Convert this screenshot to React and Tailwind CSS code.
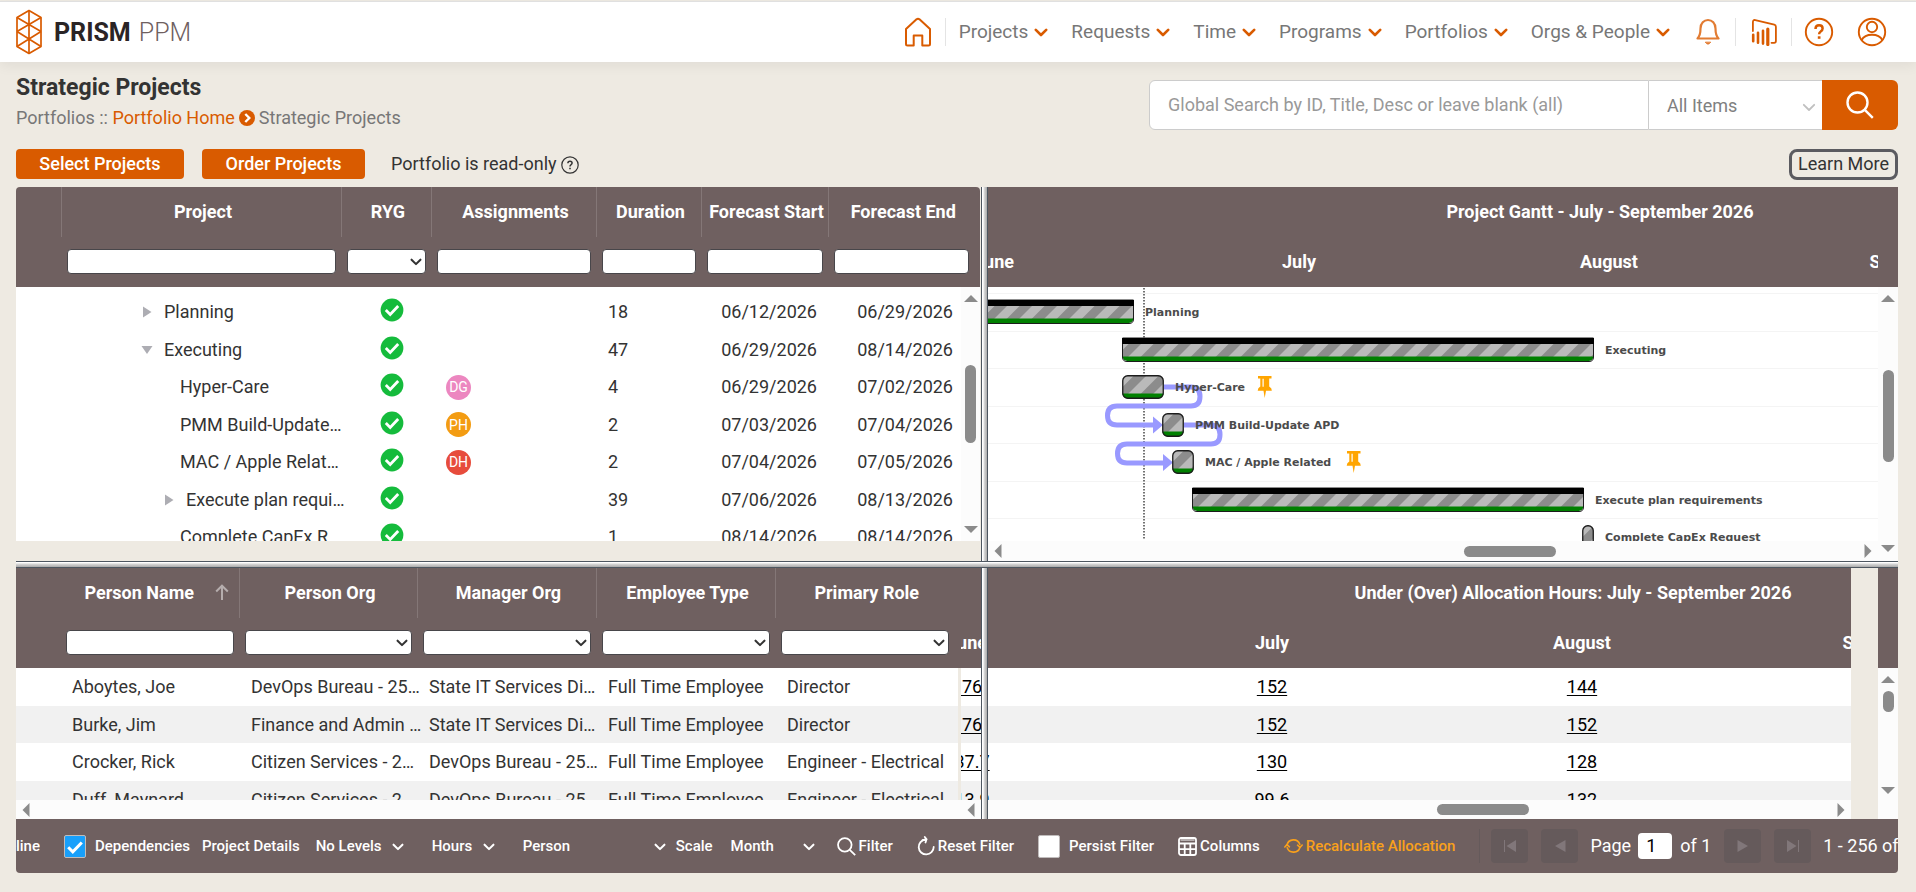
import React from "react";

const GRID_ROW = "h-[37px] odd:h-[38px]";

function Chevron({ className = "", strokeWidth = 2.4 }) {
  return (
    <svg viewBox="0 0 14 9" fill="none" stroke="currentColor" strokeWidth={strokeWidth} strokeLinecap="round" strokeLinejoin="round" className={"shrink-0 " + className} aria-hidden="true">
      <path d="M1.8 1.8 7 7l5.2-5.2" />
    </svg>
  );
}

function Logo() {
  return (
    <a href="#home" className="flex items-center gap-[11px]" aria-label="Prism PPM">
      <svg viewBox="0 0 28 46" className="h-[46px] w-7 shrink-0" fill="none" stroke="#d95b00" strokeWidth="1.7" strokeLinejoin="round" aria-hidden="true">
        <path d="M14 1.5 26 8.5v29l-12 7-12-7v-29z" />
        <path d="M14 1.5v43M2 8.5l24 14M26 8.5 2 22.5M2 22.5l24 15M26 22.5 2 37.5" />
      </svg>
      <span className="flex items-baseline gap-2 pt-0.5 text-[25px] leading-8 text-[#2a2425]">
        <span className="font-bold">PRISM</span>
        <span className="font-light text-[#6f6060]">PPM</span>
      </span>
    </a>
  );
}

const NAV = ["Projects", "Requests", "Time", "Programs", "Portfolios", "Orgs & People"];

function TopBar() {
  return (
    <header className="relative border-t border-[#e0e0e0] bg-white shadow-[0_4px_12px_rgba(0,0,0,0.06)]">
      <div className="flex h-[60px] items-center justify-between pr-[29px] pl-[15px]">
        <Logo />
        <nav className="flex items-center text-[#777777]" aria-label="Main">
          <a href="#home" aria-label="Home" className="text-[#d95b00]">
            <svg viewBox="0 0 28 30" className="h-[30px] w-7" fill="none" stroke="currentColor" strokeWidth="2" strokeLinejoin="round" aria-hidden="true">
              <path d="M2 12 12.5 2.3q1.5-1 3 0L26 12v15q0 1.5-1.5 1.5H18.300V18.500h-8.600v10H3.500Q2 28.500 2 27z" />
            </svg>
          </a>
          <span className="ml-[13px] h-7 w-px bg-[#e4e4e4]" />
          <ul className="ml-[13px] flex items-center gap-[23px]">
            {NAV.map((item) => (
              <li key={item}>
                <button type="button" className="flex items-center gap-1.5 text-[19px] leading-7">
                  {item}
                  <Chevron className="h-[9px] w-3.5 text-[#d95b00]" strokeWidth={2.6} />
                </button>
              </li>
            ))}
          </ul>
          <button type="button" aria-label="Notifications" className="ml-[26px] text-[#e27c33]">
            <svg viewBox="0 0 24 28" className="h-7 w-6" fill="none" stroke="currentColor" strokeWidth="2.2" strokeLinejoin="round" strokeLinecap="round" aria-hidden="true">
              <path d="M1.500 20.500C4.500 17.500 4.500 14 4.500 10.500 4.500 5 8 2 12 2s7.500 3 7.500 8.500c0 3.500 0 7 3 10z" />
              <path d="M9.500 24.500q2.500 3.500 5 0z" fill="currentColor" strokeWidth="1" />
            </svg>
          </button>
          <span className="ml-[15px] h-7 w-px bg-[#e4e4e4]" />
          <a href="#reports" aria-label="Reports" className="ml-[15px] text-[#d95b00]">
            <svg viewBox="0 0 26 28" className="h-7 w-[26px]" fill="none" aria-hidden="true">
              <path d="M1.900 13V4.200q0-2.600 2.400-2.100l19 4.600q1.600.4 1.600 2V23q0 1.800-1.800 1.800H20.500" stroke="currentColor" strokeWidth="1.800" strokeLinecap="round" />
              <path d="M2.200 16.800v6.400M7 14.800v10M12 12.800v12.800" stroke="currentColor" strokeWidth="2.600" strokeLinecap="round" />
              <path d="M16.800 11v15.500" stroke="currentColor" strokeWidth="3.200" strokeLinecap="round" />
            </svg>
          </a>
          <span className="ml-3.5 h-7 w-px bg-[#e4e4e4]" />
          <button type="button" aria-label="Help" className="ml-3 text-[#d95b00]">
            <svg viewBox="0 0 30 30" className="size-[30px]" fill="none" stroke="currentColor" strokeWidth="1.900" aria-hidden="true">
              <circle cx="15" cy="15" r="13.200" />
              <path d="M11.500 12q0-3.700 3.600-3.700 3.500 0 3.500 3.200 0 1.700-1.900 3-1.600 1-1.600 2.800" strokeWidth="2.500" />
              <path d="M13.800 19.300h2.700v2.500h-2.700z" fill="currentColor" stroke="none" />
            </svg>
          </button>
          <button type="button" aria-label="Account" className="ml-[23px] text-[#d95b00]">
            <svg viewBox="0 0 30 30" className="size-[30px]" fill="none" stroke="currentColor" strokeWidth="1.900" aria-hidden="true">
              <circle cx="15" cy="15" r="13.200" />
              <circle cx="15" cy="10" r="5.200" />
              <path d="M4.500 23.200Q7.500 17.800 15 17.800t10.500 5.400" />
            </svg>
          </button>
        </nav>
      </div>
    </header>
  );
}

function SearchIcon({ className, strokeWidth = 2 }) {
  return (
    <svg viewBox="0 0 28 28" className={className} fill="none" stroke="currentColor" strokeWidth={strokeWidth} aria-hidden="true">
      <circle cx="11.500" cy="11.500" r="10" />
      <path d="m18.800 18.800 8 8" />
    </svg>
  );
}

function PageIntro() {
  return (
    <div className="flex items-start justify-between pt-2.5">
      <div>
        <h1 className="pt-px text-[23px] leading-[30px] font-bold text-[#333333]">Strategic Projects</h1>
        <p className="flex items-center text-lg leading-[30px] text-[#777777]">
          <span>
            Portfolios :: <a href="#portfolio-home" className="text-[#d95b00]">Portfolio Home</a>
          </span>
          <svg viewBox="0 0 16 16" className="mx-1 size-4" aria-hidden="true">
            <circle cx="8" cy="8" r="8" fill="#d95b00" />
            <path d="m6.300 4 4 4-4 4" fill="none" stroke="#fff" strokeWidth="2.400" />
          </svg>
          <span>Strategic Projects</span>
        </p>
      </div>
      <form className="mt-2 flex h-[50px]" role="search">
        <label htmlFor="global-search" className="sr-only">Global search</label>
        <input id="global-search" type="text" placeholder="Global Search by ID, Title, Desc or leave blank (all)" className="w-[500px] rounded-l-md border border-[#cccccc] bg-white px-[18px] text-lg text-[#555555] placeholder:text-[#999999]" />
        <div className="relative flex">
          <select aria-label="Search scope" className="w-[173px] appearance-none border-y border-[#cccccc] bg-white pt-0.5 pl-[18px] text-lg text-[#808080]">
            <option>All Items</option>
          </select>
          <Chevron className="pointer-events-none absolute top-[23px] right-1.5 h-[9px] w-3.5 text-[#c0c0c0]" strokeWidth={1.8} />
        </div>
        <button type="submit" aria-label="Search" className="flex w-[76px] items-center justify-center rounded-r-md bg-[#d95b00] text-white">
          <SearchIcon className="size-7" strokeWidth={2.4} />
        </button>
      </form>
    </div>
  );
}

function ActionRow() {
  return (
    <div className="mt-4 mb-2 flex h-[30px] items-center text-lg text-[#333333]">
      <button type="button" className="h-[30px] w-[168px] rounded bg-[#d95b00] font-medium text-white">Select Projects</button>
      <button type="button" className="ml-[18px] h-[30px] w-[163px] rounded bg-[#d95b00] font-medium text-white">Order Projects</button>
      <span className="ml-[26px]">Portfolio is read-only</span>
      <svg viewBox="0 0 18 18" className="mt-0.5 ml-1 size-[18px]" fill="none" stroke="#333" strokeWidth="1.200" aria-hidden="true">
        <circle cx="9" cy="9" r="8.200" />
        <path d="M6.900 7.200q0-2 2.100-2t2.100 1.900q0 1-1.200 1.700-.9.600-.9 1.600" strokeWidth="1.500" />
        <path d="M8.200 11.700h1.600v1.600H8.200z" fill="#333" stroke="none" />
      </svg>
      <a href="#learn-more" className="ml-auto flex h-[31px] w-[109px] items-center justify-center rounded-lg border-3 border-[#5b5b60] whitespace-nowrap">Learn More</a>
    </div>
  );
}

const FIELD = "block h-[25px] w-full rounded border border-[#48464a] bg-white text-sm text-[#333333]";

function FilterField({ label, select }) {
  if (!select) return <input type="text" aria-label={"Filter " + label} className={FIELD + " px-2"} />;
  return (
    <div className="relative">
      <select aria-label={"Filter " + label} className={FIELD + " appearance-none"}>
        <option value=""></option>
      </select>
      <Chevron className="pointer-events-none absolute top-[9px] right-1 h-2 w-3 text-[#333333]" />
    </div>
  );
}

function GridHead({ columns, className }) {
  return (
    <table className={"table-fixed border-collapse bg-[#6f6060] text-white " + className}>
      <colgroup>
        {columns.map((c) => <col key={c.key} className={c.width} />)}
      </colgroup>
      <thead>
        <tr className="h-[50px]">
          {columns.map((c, i) => (
            <th key={c.key} scope="col" className={"relative p-0 pl-1 text-lg font-bold whitespace-nowrap " + (i > 0 && c.line !== false ? "border-l border-[#847777] " : "") + (c.headClass || "")}>
              {c.label}
              {c.sorted && (
                <svg viewBox="0 0 14 16" className="absolute top-4 right-2.5 h-4 w-3.5" fill="none" stroke="#b5adad" strokeWidth="2" aria-hidden="true">
                  <path d="M7 16V2M1.200 7.500 7 1.700l5.800 5.800" />
                </svg>
              )}
            </th>
          ))}
        </tr>
        <tr className="h-[50px]">
          {columns.map((c) => (
            <td key={c.key} className={"p-0 pb-px pl-1.5 " + (c.filterClass || "pr-[5px]")}>
              {c.label && <FilterField label={c.label} select={c.select} />}
            </td>
          ))}
        </tr>
      </thead>
    </table>
  );
}

const PROJECT_COLUMNS = [
  { key: "pad", label: "", width: "w-[45px]" },
  { key: "project", label: "Project", width: "w-[280px]" },
  { key: "ryg", label: "RYG", width: "w-[90px]", select: true },
  { key: "assign", label: "Assignments", width: "w-[165px]" },
  { key: "duration", label: "Duration", width: "w-[105px]" },
  { key: "start", label: "Forecast Start", width: "w-[127px]" },
  { key: "end", label: "Forecast End", width: "w-[152px]", headClass: "pr-1.5", filterClass: "pr-[11px]" },
];

const TASKS = [
  { name: "Planning", indent: "pl-20", toggle: "closed", days: 18, start: "06/12/2026", end: "06/29/2026" },
  { name: "Executing", indent: "pl-20", toggle: "open", days: 47, start: "06/29/2026", end: "08/14/2026" },
  { name: "Hyper-Care", indent: "pl-[119px]", who: "DG", tone: "bg-[#ec87c0]", days: 4, start: "06/29/2026", end: "07/02/2026" },
  { name: "PMM Build-Update…", indent: "pl-[119px]", who: "PH", tone: "bg-[#f39c12]", days: 2, start: "07/03/2026", end: "07/04/2026" },
  { name: "MAC / Apple Relat…", indent: "pl-[119px]", who: "DH", tone: "bg-[#e74c3c]", days: 2, start: "07/04/2026", end: "07/05/2026" },
  { name: "Execute plan requi…", indent: "pl-[102px]", toggle: "closed", days: 39, start: "07/06/2026", end: "08/13/2026" },
  { name: "Complete CapEx R…", indent: "pl-[119px]", days: 1, start: "08/14/2026", end: "08/14/2026" },
];

function Toggle({ state }) {
  return (
    <button type="button" aria-label={state === "open" ? "Collapse" : "Expand"} className="mr-[11px] flex w-3 justify-center">
      <svg viewBox="0 0 12 12" className="size-3" fill="#adadb3" aria-hidden="true">
        <path d={state === "open" ? "M.5 2h11L6 10z" : "M2 .5 10.500 6 2 11.500z"} />
      </svg>
    </button>
  );
}

function StatusOk() {
  return (
    <svg viewBox="0 0 24 24" className="-mt-1 block size-6" role="img" aria-label="Green">
      <circle cx="12" cy="12" r="11.400" fill="#15bb3c" />
      <path d="m5.800 12 4.400 4.400 8-8.400" fill="none" stroke="#fff" strokeWidth="2.800" />
    </svg>
  );
}

function Arrow({ dir, className = "" }) {
  const paths = { up: "M0 10 7 3l7 7z", down: "M0 4h14l-7 7z", left: "M10.500 0v14l-7-7z", right: "M3.500 0v14l7-7z" };
  return (
    <svg viewBox="0 0 14 14" className={"size-3.5 shrink-0 " + className} fill="#8b8b8b" aria-hidden="true">
      <path d={paths[dir]} />
    </svg>
  );
}

function ProjectGrid() {
  return (
    <section className="w-[964px] shrink-0" aria-label="Projects">
      <GridHead columns={PROJECT_COLUMNS} className="w-[964px] rounded-t" />
      <div className="flex h-[254px] overflow-hidden bg-white">
        <table className="mt-1.5 h-0 w-[945px] table-fixed border-collapse text-lg text-[#333333]">
          <colgroup>
            <col className="w-[45px]" />
            <col className="w-[280px]" />
            <col className="w-[90px]" />
            <col className="w-[165px]" />
            <col className="w-[105px]" />
            <col className="w-[127px]" />
            <col className="w-[133px]" />
          </colgroup>
          <tbody>
            {TASKS.map((t) => (
              <tr key={t.name} className={GRID_ROW}>
                <td className="p-0" />
                <td className="p-0">
                  <div className={"flex items-center leading-6 whitespace-nowrap " + t.indent}>
                    {t.toggle && <Toggle state={t.toggle} />}
                    {t.name}
                  </div>
                </td>
                <td className="p-0 pl-[39px]"><StatusOk /></td>
                <td className="p-0 pl-[15px]">
                  {t.who && <span className={"flex size-[25px] items-center justify-center rounded-full text-sm text-white " + t.tone}>{t.who}</span>}
                </td>
                <td className="p-0 pl-3 leading-6">{t.days}</td>
                <td className="p-0 pr-[11px] text-right leading-6">{t.start}</td>
                <td className="p-0 pr-2 text-right leading-6">{t.end}</td>
              </tr>
            ))}
          </tbody>
        </table>
        <div className="flex w-[19px] flex-col items-center bg-[#fcfcfc] pt-[5px] pb-[5px]">
          <Arrow dir="up" />
          <span className="mt-[59px] h-[78px] w-[11px] rounded-full bg-[#8b8b8b]" />
          <Arrow dir="down" className="mt-auto" />
        </div>
      </div>
    </section>
  );
}

function VerticalSplitter({ className = "" }) {
  return (
    <div role="separator" aria-orientation="vertical" className={"w-[7px] shrink-0 border-x border-[#4d5660] bg-linear-to-r from-white from-20% via-[#d4d4d4] via-50% to-[#aaaaaa] " + className} />
  );
}

function Months({ title, offset }) {
  return (
    <div className="overflow-hidden bg-[#6f6060] text-lg font-bold text-white">
      <div className={"w-[1220px] " + offset}>
        <div className="flex h-[50px] items-center justify-center pr-2 pl-[300px]">{title}</div>
        <div className="flex h-[50px] items-center text-center">
          <span className="w-[300px]">June</span>
          <span className="w-[310px]">July</span>
          <span className="w-[310px]">August</span>
          <span className="w-[300px]">September</span>
        </div>
      </div>
    </div>
  );
}

/* Bar positions are in pixels from the left edge and top of the visible chart: ten pixels per day. */
const BARS = [
  { label: "Planning", x: -25, y: 13, w: 171, tx: 157, summary: true },
  { label: "Executing", x: 134, y: 51, w: 472, tx: 617, summary: true },
  { label: "Hyper-Care", x: 134, y: 88, w: 42, tx: 187, pin: 270 },
  { label: "PMM Build-Update APD", x: 174, y: 126, w: 22, tx: 207 },
  { label: "MAC / Apple Related", x: 184, y: 163, w: 22, tx: 217, pin: 359 },
  { label: "Execute plan requirements", x: 204, y: 201, w: 392, tx: 607, summary: true },
  { label: "Complete CapEx Request", x: 594, y: 238, w: 12, tx: 617 },
];
const LINES = [6, 44, 81, 119, 156, 194, 231];

function Bar({ x, y, w, label, tx, summary, pin }) {
  const outline = summary
    ? `M.5 0V19q0 4.500 4.500 4.500H${w - 5}q4.500 0 4.500-4.500V0z`
    : null;
  const clip = "bar-" + y;
  return (
    <g>
      <g transform={`translate(${x} ${y})`}>
        <clipPath id={clip}>
          <rect x="0.500" y={summary ? -8 : 0.5} width={w - 1} height={summary ? 31 : 23} rx="5" />
        </clipPath>
        <g clipPath={`url(#${clip})`}>
          <rect width={w} height="24" fill="#bababa" />
          <rect width={w} height="24" fill="url(#stripes)" />
          <rect y="18.500" width={w} height="6" fill="#008000" />
        </g>
        {summary ? (
          <>
            <path d={outline} fill="none" stroke="#1c1c1c" />
            <rect width={w} height="6" fill="#000" />
          </>
        ) : (
          <rect x="0.750" y="0.750" width={w - 1.5} height="22.500" rx="5" fill="none" stroke="#1c1c1c" strokeWidth="1.300" />
        )}
      </g>
      <text x={tx} y={y + 16} fill="#4b4b4b" className="font-[DejaVu_Sans,Verdana,sans-serif] text-[11px] font-bold">{label}</text>
      {pin && (
        <path transform={`translate(${pin} ${y + 1})`} d="M0 0h13.500v2.500h-2.300v8q2.600 1.300 2.600 4.200H8L6.700 22 5.500 14.700H-.3q0-2.900 2.600-4.200v-8H0z M4.500 2.800v8h1.200v-8z" fill="#ffa500" fillRule="evenodd" />
      )}
    </g>
  );
}

function GanttChart() {
  return (
    <svg className="block h-[254px] w-full" role="img" aria-label="Project Gantt chart">
      <defs>
        <pattern id="stripes" width="25" height="25" patternUnits="userSpaceOnUse">
          <path d="M12.500 0H25L0 25V12.500zM25 12.500V25H12.500z" fill="#8c8c8c" />
        </pattern>
      </defs>
      {LINES.map((y) => <line key={y} x1="0" x2="100%" y1={y + 0.5} y2={y + 0.5} stroke="#f4f4f4" />)}
      <line x1="156" x2="156" y1="1" y2="253" stroke="#444" strokeWidth="1.500" strokeDasharray="1.500 1.500" />
      <g fill="none" stroke="#9999ff" strokeWidth="5">
        <path d="M176 100h27q9 0 9 9.500t-9 9.500h-74q-9.500 0-9.500 9.500t9.500 9.500h37" />
        <path d="M196 138h27q9 0 9 9.500t-9 9.500h-84q-9.500 0-9.500 9.500t9.500 9.500h37" />
      </g>
      <path d="M165 129.500 175 138l-10 8.500zM175 167l10 8.500-10 8.500z" fill="#9999ff" />
      {BARS.map((b) => <Bar key={b.label} {...b} />)}
    </svg>
  );
}

function GanttPanel() {
  return (
    <section className="flex min-w-0 flex-1" aria-label="Project Gantt">
      <div className="min-w-0 flex-1">
        <Months title="Project Gantt - July - September 2026" offset="-ml-[144px]" />
        <div className="bg-white">
          <GanttChart />
        </div>
        <div className="flex h-5 items-center bg-[#fcfcfc] px-[3px]">
          <Arrow dir="left" />
          <span className="ml-auto h-[11px] w-[92px] rounded-full bg-[#8b8b8b]" />
          <Arrow dir="right" className="ml-[305px]" />
        </div>
      </div>
      <div className="flex w-5 flex-col">
        <div className="h-[100px] bg-[#6f6060]" />
        <div className="flex flex-1 flex-col items-center bg-[#fcfcfc] pt-[5px] pb-1">
          <Arrow dir="up" />
          <span className="mt-16 h-[92px] w-[11px] rounded-full bg-[#8b8b8b]" />
          <Arrow dir="down" className="mt-auto mb-0.5" />
        </div>
      </div>
    </section>
  );
}

const PEOPLE_COLUMNS = [
  { key: "pad", label: "", width: "w-11" },
  { key: "name", label: "Person Name", width: "w-[179px]", headClass: "pr-6", sorted: true, line: false },
  { key: "org", label: "Person Org", width: "w-[178px]", select: true },
  { key: "manager", label: "Manager Org", width: "w-[179px]", select: true },
  { key: "type", label: "Employee Type", width: "w-[179px]", select: true },
  { key: "role", label: "Primary Role", width: "w-[179px]", select: true },
  { key: "tail", label: "", width: "w-[7px]", line: false, filterClass: "pl-0 pr-0" },
];

const PEOPLE = [
  ["Aboytes, Joe", "DevOps Bureau - 25…", "State IT Services Di…", "Full Time Employee", "Director"],
  ["Burke, Jim", "Finance and Admin …", "State IT Services Di…", "Full Time Employee", "Director"],
  ["Crocker, Rick", "Citizen Services - 2…", "DevOps Bureau - 25…", "Full Time Employee", "Engineer - Electrical"],
  ["Duff, Maynard", "Citizen Services - 2…", "DevOps Bureau - 25…", "Full Time Employee", "Engineer - Electrical"],
];

const HOURS = [
  ["176", "152", "144", "160"],
  ["176", "152", "152", "160"],
  ["137.7", "130", "128", "132"],
  ["113.9", "99.6", "132", "140"],
];

function PeopleGrid() {
  return (
    <section className="w-[945px] shrink-0" aria-label="People">
      <GridHead columns={PEOPLE_COLUMNS} className="w-[945px]" />
      <div className="h-[132px] w-[942px] overflow-hidden bg-white">
        <table className="w-full table-fixed border-collapse text-lg text-[#333333]">
          <colgroup>
            <col className="w-11" />
            <col className="w-[179px]" />
            <col className="w-[178px]" />
            <col className="w-[179px]" />
            <col className="w-[179px]" />
            <col />
          </colgroup>
          <tbody>
            {PEOPLE.map((row) => (
              <tr key={row[0]} className={GRID_ROW + " even:bg-[#f1f1f1]"}>
                <td className="p-0" />
                {row.map((cell, i) => <td key={i} className="p-0 pl-3 leading-6 whitespace-nowrap">{cell}</td>)}
              </tr>
            ))}
          </tbody>
        </table>
      </div>
      <div className="flex h-[19px] items-center bg-[#fcfcfc] px-[3px]">
        <Arrow dir="left" />
      </div>
    </section>
  );
}

function AllocationPanel() {
  return (
    <section className="relative flex min-w-0 flex-1" aria-label="Allocation hours">
      <div className="min-w-0 flex-1">
        <Months title="Under (Over) Allocation Hours: July - September 2026" offset="-ml-[144px]" />
        <div className="h-[132px] overflow-hidden bg-white">
          <table className="-ml-[144px] w-[1220px] table-fixed border-collapse text-center text-lg text-black">
            <colgroup>
              <col className="w-[300px]" />
              <col className="w-[310px]" />
              <col className="w-[310px]" />
              <col className="w-[300px]" />
            </colgroup>
            <tbody>
              {HOURS.map((row, r) => (
                <tr key={r} className={GRID_ROW + " even:bg-[#f1f1f1]"}>
                  {row.map((v, i) => (
                    <td key={i} className="p-0 leading-6">
                      <a href="#hours" className="underline underline-offset-2">{v}</a>
                    </td>
                  ))}
                </tr>
              ))}
            </tbody>
          </table>
        </div>
        <div className="flex h-[19px] items-center bg-[#fcfcfc] px-[3px]">
          <Arrow dir="left" />
          <span className="ml-auto h-[11px] w-[92px] rounded-full bg-[#8b8b8b]" />
          <Arrow dir="right" className="ml-[305px]" />
        </div>
      </div>
      <VerticalSplitter className="absolute inset-y-0 left-5" />
      <div className="ml-[27px] flex w-5 flex-col">
        <div className="h-[100px] bg-[#6f6060]" />
        <div className="flex flex-1 flex-col items-center bg-[#fcfcfc] pt-[5px] pb-1">
          <Arrow dir="up" />
          <span className="mt-1 h-[21px] w-[11px] rounded-full bg-[#8b8b8b]" />
          <Arrow dir="down" className="mt-auto mb-[18px]" />
        </div>
      </div>
    </section>
  );
}

function BarSelect({ label, value, id, className }) {
  return (
    <div className={"relative shrink-0 " + className}>
      <select id={id} aria-label={label} className="w-full appearance-none bg-transparent text-[15px] font-medium text-white">
        <option>{value}</option>
      </select>
      <Chevron className="pointer-events-none absolute top-2 right-0 h-2 w-3 text-white" />
    </div>
  );
}

const TICK = "h-[23px] w-[22px] shrink-0 appearance-none rounded-xs border border-[#c0bcbc] bg-white checked:bg-[#18a0fb]";

function PageButton({ label, className = "", path }) {
  return (
    <button type="button" disabled aria-label={label} className={"flex h-[34px] w-[37px] shrink-0 items-center justify-center rounded bg-[#655a5b] " + className}>
      <svg viewBox="0 0 14 14" className="size-3.5" fill="#81777a" aria-hidden="true">
        <path d={path} />
      </svg>
    </button>
  );
}

function Toolbar() {
  return (
    <div className="flex h-[54px] items-center overflow-hidden rounded-b bg-[#6f6060] text-[15px] font-medium whitespace-nowrap text-white">
      <label htmlFor="baseline" className="flex w-6 shrink-0 justify-end overflow-hidden">Baseline</label>
      <input id="baseline" type="checkbox" className="sr-only" />
      <div className="relative ml-6 flex shrink-0 items-center gap-[9px]">
        <input id="dependencies" type="checkbox" defaultChecked className={TICK} />
        <svg viewBox="0 0 16 13" className="pointer-events-none absolute top-[6px] left-[3px] h-[13px] w-4" fill="none" stroke="#fff" strokeWidth="3" aria-hidden="true">
          <path d="m1.200 6.200 4.600 4.600L14.800 1.500" />
        </svg>
        <label htmlFor="dependencies">Dependencies</label>
      </div>
      <button type="button" className="ml-3 shrink-0">Project Details</button>
      <BarSelect label="Levels" value="No Levels" className="ml-4 w-[88px]" />
      <BarSelect label="Units" value="Hours" className="ml-7 w-[63px]" />
      <BarSelect label="Group by" value="Person" className="ml-7 w-[143px]" />
      <label htmlFor="scale" className="ml-2.5 shrink-0">Scale</label>
      <BarSelect id="scale" label="Scale" value="Month" className="ml-[18px] w-[84px]" />
      <button type="button" className="ml-[22px] flex shrink-0 items-center gap-[3px]">
        <SearchIcon className="size-[19px]" strokeWidth={2.6} />
        Filter
      </button>
      <button type="button" className="ml-6 flex shrink-0 items-center gap-[3px]">
        <svg viewBox="0 0 18 20" className="h-5 w-[18px]" fill="none" stroke="currentColor" strokeWidth="1.800" strokeLinecap="round" strokeLinejoin="round" aria-hidden="true">
          <path d="M8.500 3.500A7.500 7.500 0 1 0 16.700 11" />
          <path d="M5.500 4.200 9.600 3.300 7.800 1M9.600 3.300 8.500 6.500" />
        </svg>
        Reset Filter
      </button>
      <div className="ml-6 flex shrink-0 items-center gap-[9px]">
        <input id="persist" type="checkbox" className={TICK} />
        <label htmlFor="persist">Persist Filter</label>
      </div>
      <button type="button" className="ml-6 flex shrink-0 items-center gap-[3px]">
        <svg viewBox="0 0 19 19" className="size-[19px]" fill="none" stroke="currentColor" strokeWidth="1.800" aria-hidden="true">
          <rect x="1" y="1" width="17" height="17" rx="2" />
          <path d="M1 6.500h17M1 12.200h17M6.700 6.500V18M12.300 6.500V18" />
          <path d="M2.500 3h14" strokeWidth="1" />
        </svg>
        Columns
      </button>
      <button type="button" className="ml-6 flex shrink-0 items-center gap-[3px] text-[#f9a01b]">
        <svg viewBox="0 0 19 18" className="h-[18px] w-[19px]" fill="none" stroke="currentColor" strokeWidth="1.600" strokeLinecap="round" strokeLinejoin="round" aria-hidden="true">
          <path d="M3 8A6.700 6.700 0 0 1 15.800 7.200M16 10A6.700 6.700 0 0 1 3.200 10.800" />
          <path d="M.8 10 3 7.600 5.400 9.800M13.600 8.200 16 10.400 18.200 8" />
        </svg>
        Recalculate Allocation
      </button>
      <span className="ml-6 h-[34px] w-px shrink-0 bg-[#655a5b]" />
      <PageButton label="First page" className="ml-[11px]" path="M1 1h1v12H1zM13 1v12L3.500 7z" />
      <PageButton label="Previous page" className="ml-[13px]" path="M12.500 1v12L2 7z" />
      <label htmlFor="page" className="ml-3 shrink-0 text-lg font-normal">Page</label>
      <input id="page" type="text" defaultValue="1" className="ml-[7px] h-[26px] w-[34px] shrink-0 rounded-sm bg-white pl-2 text-lg font-normal text-black" />
      <span className="ml-2 shrink-0 text-lg font-normal">of 1</span>
      <PageButton label="Next page" className="ml-[13px]" path="M1.500 1v12L12 7z" />
      <PageButton label="Last page" className="ml-[13px]" path="M1 1v12l9.500-6zM12 1h1v12h-1z" />
      <span className="ml-3 shrink-0 text-lg font-normal">1 - 256 of 256</span>
    </div>
  );
}

export default function App() {
  return (
    <div className="min-h-screen bg-[#eeeae2] pt-px font-[Roboto,sans-serif]">
      <TopBar />
      <main className="pr-[18px] pb-[19px] pl-4">
        <PageIntro />
        <ActionRow />
        <div className="flex">
          <ProjectGrid />
          <VerticalSplitter className="ml-px" />
          <GanttPanel />
        </div>
        <div role="separator" aria-orientation="horizontal" className="h-[7px] border-y border-[#4d5660] bg-linear-to-b from-white from-10% via-[#d0d0d0] via-50% to-[#aaaaaa]" />
        <div className="flex">
          <PeopleGrid />
          <AllocationPanel />
        </div>
        <Toolbar />
      </main>
    </div>
  );
}
